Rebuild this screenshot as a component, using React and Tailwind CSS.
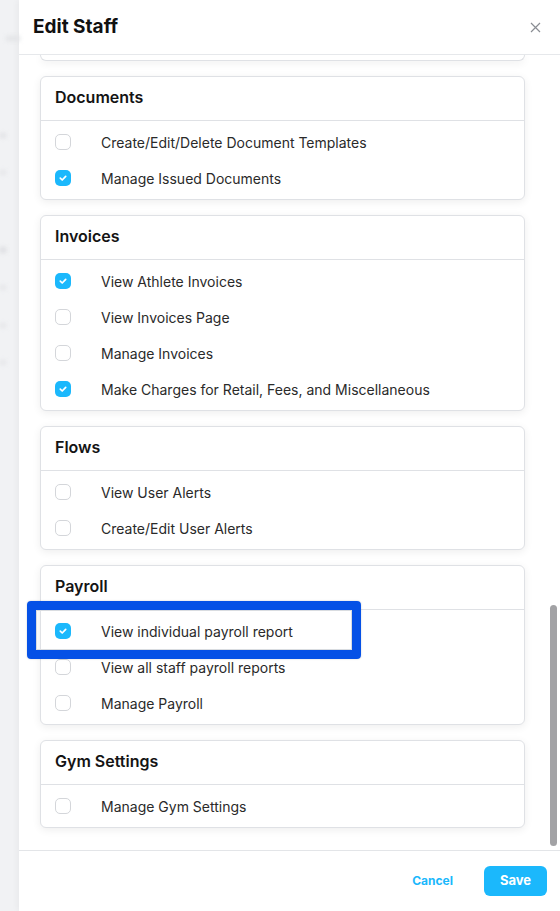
import React from "react";

const sections = [
  { title: "Documents", items: [["Create/Edit/Delete Document Templates", false], ["Manage Issued Documents", true]] },
  { title: "Invoices", items: [["View Athlete Invoices", true], ["View Invoices Page", false], ["Manage Invoices", false], ["Make Charges for Retail, Fees, and Miscellaneous", true]] },
  { title: "Flows", items: [["View User Alerts", false], ["Create/Edit User Alerts", false]] },
  { title: "Payroll", items: [["View individual payroll report", true], ["View all staff payroll reports", false], ["Manage Payroll", false]] },
  { title: "Gym Settings", items: [["Manage Gym Settings", false]] },
];

function Check({ checked }) {
  if (checked) {
    return (
      <div className="w-4 h-4 rounded-[5px] bg-[#1bb8fc] flex items-center justify-center shrink-0">
        <svg width="10" height="10" viewBox="0 0 10 10" fill="none">
          <path d="M2.3 5.2 L4.2 7 L7.7 3.3" stroke="white" strokeWidth="1.7" strokeLinecap="round" strokeLinejoin="round" />
        </svg>
      </div>
    );
  }
  return <div className="w-4 h-4 rounded-[5px] border border-[#d4d6da] bg-white shrink-0" />;
}

function Card({ title, items }) {
  return (
    <div className="bg-white border border-[#dfe1e5] rounded-[6px] shadow-[0_2px_8px_rgba(0,0,0,0.07)]">
      <div className="h-[44px] flex items-center px-[14px] pb-[3px] border-b border-[#dfe1e5] text-[16px] font-semibold text-[#141414]">
        {title}
      </div>
      <div className="py-[3px]">
        {items.map(([label, checked]) => (
          <div key={label} className="h-[36px] flex items-center pl-[14px]">
            <Check checked={checked} />
            <span className="ml-[30px] text-[14px] text-[#2a2a2a]">{label}</span>
          </div>
        ))}
      </div>
    </div>
  );
}

export default function App() {
  return (
    <div className="w-[560px] h-[911px] flex bg-[#f1f2f4] overflow-hidden" style={{ fontFamily: "Inter, 'Noto Sans', sans-serif" }}>
      <div className="w-[19px] shrink-0 relative">
        <div className="absolute left-[6px] top-[36px] w-[14px] h-[5px] bg-[#e2e3e6] blur-[2px]" />
        <div className="absolute left-[0px] top-[133px] w-[6px] h-[5px] bg-[#e0e1e4] blur-[2px]" />
        <div className="absolute left-[0px] top-[170px] w-[6px] h-[5px] bg-[#e4e5e8] blur-[2px]" />
        <div className="absolute left-[0px] top-[247px] w-[6px] h-[6px] bg-[#dcdde0] blur-[2px]" />
        <div className="absolute left-[0px] top-[285px] w-[6px] h-[5px] bg-[#e4e5e8] blur-[2px]" />
        <div className="absolute left-[0px] top-[323px] w-[6px] h-[5px] bg-[#e4e5e8] blur-[2px]" />
        <div className="absolute left-[0px] top-[360px] w-[6px] h-[5px] bg-[#e4e5e8] blur-[2px]" />
      </div>
      <div className="flex-1 bg-white flex flex-col shadow-[-2px_0_6px_rgba(0,0,0,0.04)]">
        <div className="h-[55px] shrink-0 flex items-center justify-between pl-[14px] pr-[18px] pt-[1px] border-b border-[#e6e8eb] relative z-10">
          <span className="text-[19px] font-bold text-[#111]">Edit Staff</span>
          <svg width="11" height="11" viewBox="0 0 11 11" className="mr-[1px]">
            <path d="M1 1 L10 10 M10 1 L1 10" stroke="#8a8d93" strokeWidth="1.2" />
          </svg>
        </div>
        <div className="flex-1 relative overflow-hidden">
          <div className="pl-[21px] pr-[35px] flex flex-col gap-[15px]">
            <div className="h-[6px] bg-white border border-t-0 border-[#dfe1e5] rounded-b-[6px] shadow-[0_2px_8px_rgba(0,0,0,0.07)]" />
            {sections.map((s) => (
              <Card key={s.title} title={s.title} items={s.items} />
            ))}
          </div>
          <div className="absolute right-[3px] top-[550px] w-[7px] h-[241px] rounded-full bg-[#a2a2a5]" />
          <div className="absolute left-[8px] top-[546px] w-[334px] h-[58px] border-[9px] border-[#0551e6] rounded-[4px] shadow-[0_0_2px_rgba(0,0,0,0.2)]">
            <div className="w-full h-full border border-[#d9dce0]" />
          </div>
        </div>
        <div className="h-[61px] shrink-0 border-t border-[#e3e5e8] flex items-center justify-end pr-[13px] gap-[31px]">
          <span className="text-[12px] font-bold text-[#1bb8fc]">Cancel</span>
          <div className="w-[63px] h-[30px] rounded-[6px] bg-[#1bb8fc] flex items-center justify-center text-[13px] font-bold text-white">Save</div>
        </div>
      </div>
    </div>
  );
}
